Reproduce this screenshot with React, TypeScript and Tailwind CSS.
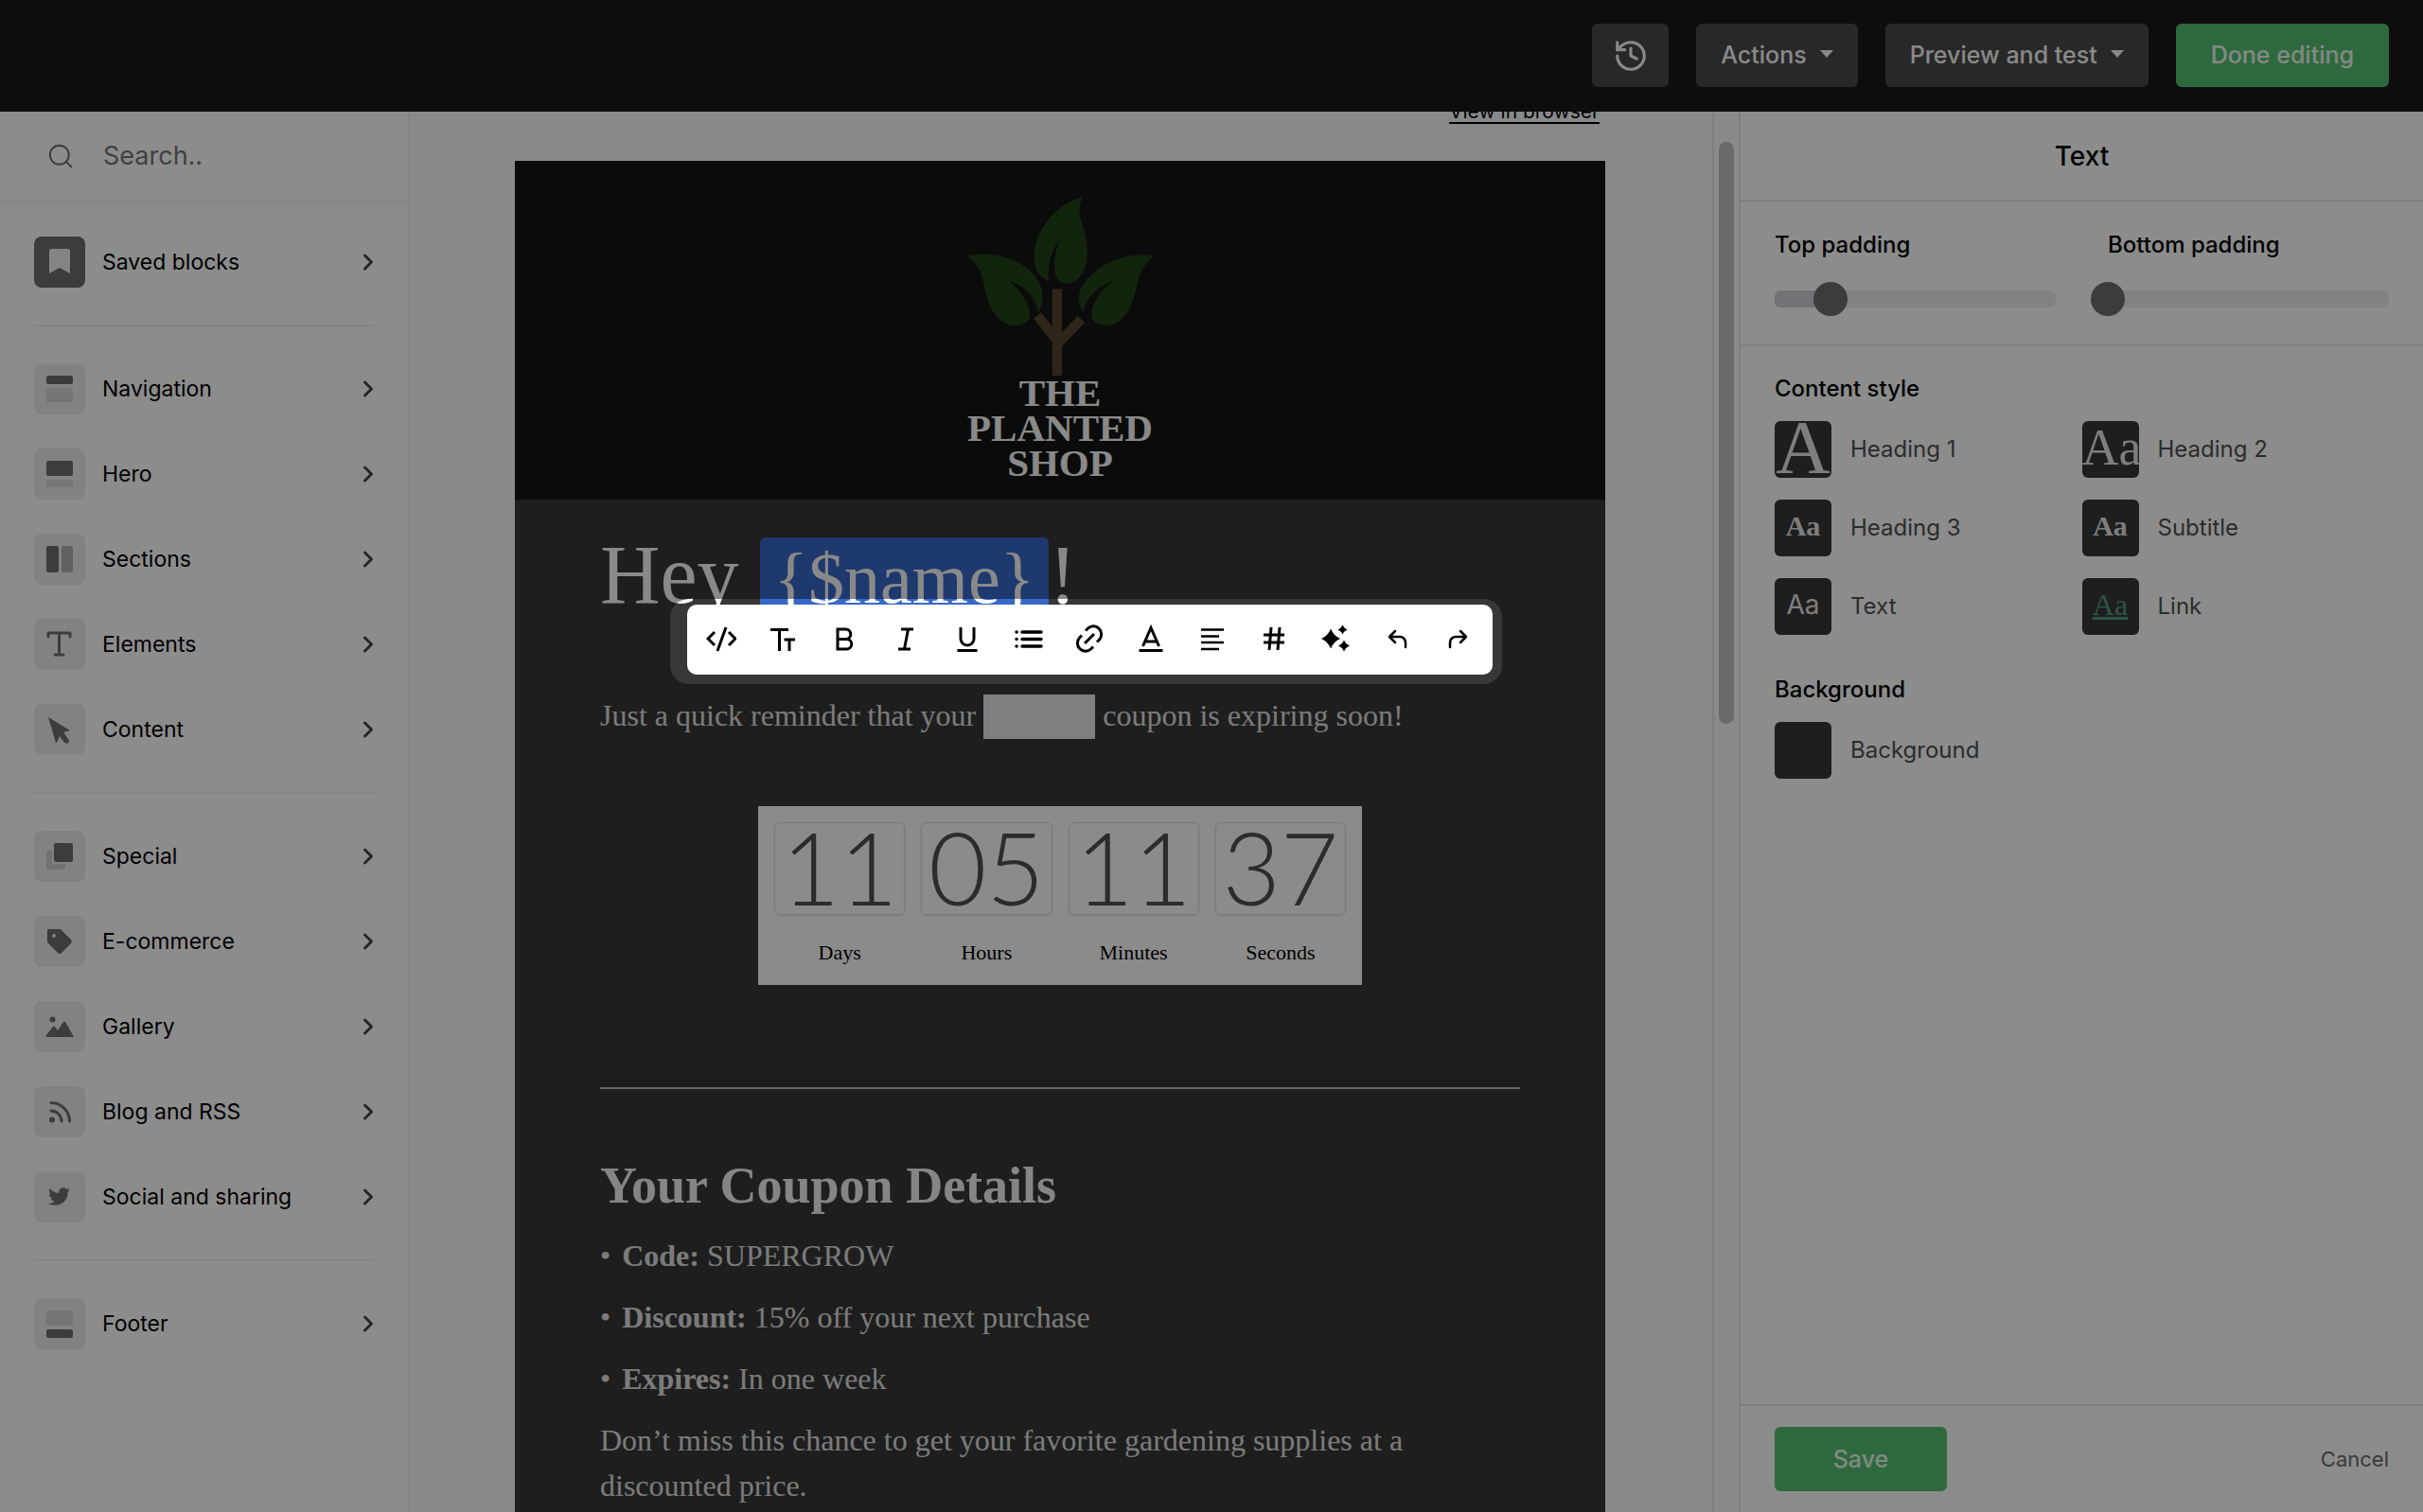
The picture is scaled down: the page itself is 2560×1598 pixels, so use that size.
import type { ReactNode } from "react";
import { ChevronRight, History, Search } from "lucide-react";
import { FaTwitter } from "react-icons/fa";

type BlockItem = { label: string; icon: ReactNode; solid?: boolean };

const BLOCK_GROUPS: BlockItem[][] = [
  [
    {
      label: "Saved blocks",
      solid: true,
      icon: <path d="M18 13h18a2 2 0 0 1 2 2v24l-11-6-11 6V15a2 2 0 0 1 2-2z" className="fill-[#eef0f2]" />,
    },
  ],
  [
    {
      label: "Navigation",
      icon: (
        <>
          <rect x="13" y="13" width="28" height="9" rx="2" />
          <path d="M15 26h24a2 2 0 0 1 2 2v13H13V28a2 2 0 0 1 2-2z" className="fill-[#d3d5d9]" />
        </>
      ),
    },
    {
      label: "Hero",
      icon: (
        <>
          <rect x="13" y="13" width="28" height="16" rx="2" />
          <path d="M15 33h24a2 2 0 0 1 2 2v6H13v-6a2 2 0 0 1 2-2z" className="fill-[#d3d5d9]" />
        </>
      ),
    },
    {
      label: "Sections",
      icon: (
        <>
          <rect x="13" y="13" width="13" height="28" rx="2" />
          <rect x="29" y="13" width="12" height="28" rx="2" className="fill-[#b0b0b0]" />
        </>
      ),
    },
    {
      label: "Elements",
      icon: (
        <path
          d="M15 19v-4h23v4M26.500 15v23M22 38h9"
          fill="none"
          stroke="#6e6e6e"
          strokeWidth="3"
          strokeLinecap="round"
          strokeLinejoin="round"
        />
      ),
    },
    { label: "Content", icon: <path d="M15 14l23 14-7 2 5 7a2.400 2.400 0 0 1-3 4h-1l-5-7-3 7h-1z" /> },
  ],
  [
    {
      label: "Special",
      icon: (
        <>
          <path d="M15 21h4v14h14v4a2 2 0 0 1-2 2H15a2 2 0 0 1-2-2V23a2 2 0 0 1 2-2z" className="fill-[#cdcfd2]" />
          <rect x="21" y="13" width="20" height="20" rx="2" />
        </>
      ),
    },
    {
      label: "E-commerce",
      icon: (
        <path
          fillRule="evenodd"
          d="M15 14h13l11 11a3 3 0 0 1 0 4L29 39a3 3 0 0 1-4 0L14 28V15a1 1 0 0 1 1-1zm6 5a2 2 0 1 0 0 4 2 2 0 0 0 0-4z"
        />
      ),
    },
    {
      label: "Gallery",
      icon: (
        <>
          <circle cx="19.500" cy="19.500" r="3" />
          <path d="M14 38a1 1 0 0 1-1-2l7-9q1-1 2 0l3 4 6-9q1-1 2 0l8 14a1 1 0 0 1-1 2z" />
        </>
      ),
    },
    {
      label: "Blog and RSS",
      icon: (
        <>
          <circle cx="19" cy="35.500" r="3" />
          <path
            d="M18 26a11 11 0 0 1 11 11M18 17.500A19.500 19.500 0 0 1 37.500 37"
            fill="none"
            stroke="#6e6e6e"
            strokeWidth="3"
            strokeLinecap="round"
          />
        </>
      ),
    },
    { label: "Social and sharing", icon: <FaTwitter x="15" y="15" width="24" height="24" /> },
  ],
  [
    {
      label: "Footer",
      icon: (
        <>
          <path d="M13 13h28v16H15a2 2 0 0 1-2-2z" className="fill-[#d3d5d9]" />
          <rect x="13" y="33" width="28" height="9" rx="2" />
        </>
      ),
    },
  ],
];

// Icons are drawn around the origin of a 32 x 32 box.
const TOOLS: { label: string; icon: ReactNode }[] = [
  { label: "Source code", icon: <path d="M-7-8l-7 7 7 7M5-13L-4 12M8-8l7 7-7 7" /> },
  { label: "Font size", icon: <path d="M-13-10.500H6M-3.500-10.500V12M1.500 0H13M7 0v12" /> },
  {
    label: "Bold",
    icon: <path d="M-7-11H1.500a5 5 0 0 1 0 10.500H-7zM-7-.5H2.500a5 5 0 0 1 0 10.500H-7z" />,
  },
  { label: "Italic", icon: <path d="M-5-11H8M-8 10H5M2.500-11L-1.500 10" /> },
  { label: "Underline", icon: <path d="M-7-13V-1a7 7 0 0 0 14 0v-12M-10.500 11.500h21" /> },
  {
    label: "List",
    icon: <path strokeWidth="3.500" strokeLinecap="round" d="M-13-8h.1M-13-.5h.1M-13 7h.1M-7-8H13M-7-.5H13M-7 7H13" />,
  },
  {
    label: "Link",
    icon: (
      <path d="M-4-9.500l2.500-2.500a8.500 8.500 0 0 1 12 12L8 2.500M4 7.500L1.500 10a8.500 8.500 0 0 1-12-12L-8-4.500M-5 4L5-6" />
    ),
  },
  { label: "Text color", icon: <path d="M-8.500 7L0-12.500 8.500 7M-6 2H6M-12.500 11.500h25" /> },
  { label: "Align left", icon: <path strokeWidth="2.500" d="M-12-10.500h24M-12-3.500H7M-12 3h24M-12 10H7" /> },
  { label: "Variable", icon: <path d="M-3-13l-2 24M6-13L4 11M-11-5h22M-11 3h22" /> },
  {
    label: "Assistant",
    icon: (
      <path
        fill="currentColor"
        stroke="none"
        d="M-5-11.500q3 7.500 10 10.500-7 3-10 10.500-3-7.500-10-10.500 7-3 10-10.500zM7.500-15.500q1.500 3.500 5 5-3.500 1.500-5 5-1.500-3.500-5-5 3.500-1.500 5-5zM9 .5q2 4.500 6 6-4 1.500-6 6-2-4.500-6-6 4-1.500 6-6z"
      />
    ),
  },
  {
    label: "Undo",
    icon: <path strokeWidth="2.500" strokeLinecap="round" strokeLinejoin="round" d="M-2-9l-6 6 6 6M-8-3H3a6 6 0 0 1 6 6v5" />,
  },
  {
    label: "Redo",
    icon: <path strokeWidth="2.500" strokeLinecap="round" strokeLinejoin="round" d="M2-9l6 6-6 6M8-3H-3a6 6 0 0 0-6 6v5" />,
  },
];

const STYLES = [
  {
    label: "Heading 1",
    sample: "A",
    className: "justify-center font-['Liberation_Serif',serif] text-[80px] leading-[54px] text-[#e6e6e6]",
  },
  {
    label: "Heading 2",
    sample: "Aa",
    className: "justify-start font-['Liberation_Serif',serif] text-[54px] leading-[54px] text-[#e6e6e6]",
  },
  {
    label: "Heading 3",
    sample: "Aa",
    className: "justify-center font-['Liberation_Serif',serif] text-[30px] font-bold text-[#e6e6e6]",
  },
  {
    label: "Subtitle",
    sample: "Aa",
    className: "justify-center font-['Liberation_Serif',serif] text-[30px] font-bold text-[#e6e6e6]",
  },
  { label: "Text", sample: "Aa", className: "justify-center text-[28px] text-[#e6e6e6]" },
  {
    label: "Link",
    sample: "Aa",
    className: "justify-center font-['Liberation_Serif',serif] text-[32px] text-[#559a83] underline",
  },
];

const COUNTDOWN = [
  { value: "11", unit: "Days" },
  { value: "05", unit: "Hours" },
  { value: "11", unit: "Minutes" },
  { value: "37", unit: "Seconds" },
];

const COUPON = [
  { term: "Code:", value: "SUPERGROW" },
  { term: "Discount:", value: "15% off your next purchase" },
  { term: "Expires:", value: "In one week" },
];

export default function App() {
  return (
    <div className="flex h-screen flex-col overflow-hidden bg-white font-[Inter,sans-serif] text-black">
      <TopBar />
      <div className="flex min-h-0 flex-1">
        <BlockSidebar />
        <Canvas />
        <div className="w-[30px] shrink-0 border-x-2 border-[#e6e6e6] bg-[#fafafa] px-[5px] pt-8">
          <div className="h-[615px] rounded-full bg-[#c1c1c1]" />
        </div>
        <SettingsPanel />
      </div>
    </div>
  );
}

function TopBar() {
  const button = "flex h-[67px] items-center rounded-md bg-[#4a4a4a] text-[25px] font-medium text-[#fafafa]";
  return (
    <header className="relative z-10 flex h-[118px] shrink-0 items-start justify-end gap-[29px] bg-[#181818] px-9 pt-[25px]">
      <button aria-label="History" className={`${button} w-[81px] justify-center`}>
        <History className="size-[38px]" />
      </button>
      <button className={`${button} gap-3.5 px-[26px]`}>
        Actions
        <Caret />
      </button>
      <button className={`${button} gap-3.5 px-[26px]`}>
        Preview and test
        <Caret />
      </button>
      <button className="h-[67px] rounded-md bg-[#55c071] px-[37px] text-[25px] font-medium text-white/90">
        Done editing
      </button>
    </header>
  );
}

function Caret() {
  return (
    <svg viewBox="0 0 14 8" className="mb-1 h-2 w-3.5 fill-current">
      <path d="M0 0h14L7 8z" />
    </svg>
  );
}

function BlockSidebar() {
  return (
    <aside className="w-[433px] shrink-0 border-r-2 border-[#f0f0f0] bg-white">
      <label className="flex h-24 items-center gap-[30px] border-b-2 border-[#f0f0f0] pl-[49px] pr-9">
        <Search className="size-[30px] shrink-0 text-[#6e6e6e]" strokeWidth={1.5} />
        <input
          type="search"
          aria-label="Search blocks"
          placeholder="Search.."
          className="w-full min-w-0 bg-transparent text-[27px] outline-none placeholder:text-[#757575]"
        />
      </label>
      <nav className="divide-y-2 divide-[#f0f0f0] px-9">
        {BLOCK_GROUPS.map((group) => (
          <ul key={group[0].label} className="flex flex-col gap-9 py-[39px] first:pt-9">
            {group.map((item) => (
              <li key={item.label}>
                <button className="flex w-full items-center text-left text-[23px] leading-8">
                  <span
                    className={`mr-[18px] rounded-lg ${item.solid ? "bg-[#6e6e6e]" : "bg-[#ebedf0]"}`}
                  >
                    <svg viewBox="0 0 54 54" className="size-[54px] fill-[#6e6e6e] text-[#6e6e6e]">
                      {item.icon}
                    </svg>
                  </span>
                  {item.label}
                  <ChevronRight className="-mr-2 ml-auto size-7 text-[#444]" strokeWidth={2.5} />
                </button>
              </li>
            ))}
          </ul>
        ))}
      </nav>
    </aside>
  );
}

function Canvas() {
  return (
    <main className="min-w-0 flex-1 bg-[#f7f9fc] pr-0.5">
      <div className="mx-auto w-[1152px]">
        <div className="-mt-4 flex h-[68px] justify-end pr-1.5 text-[21px] leading-8">
          <a href="#browser" className="underline underline-offset-4">
            View in browser
          </a>
        </div>
        <article className="bg-[#383838] pb-12 font-['Liberation_Serif',serif] text-[#e1e1e1]">
          <Logo />
          <div className="px-[90px] text-[32px] leading-[48px]">
            <div className="relative pt-[38px]">
              <h1 className="text-[88px] leading-[84px] text-[#fafafa]">
                Hey{" "}
                <span className="inline-block rounded-md bg-[#3869c8] px-[15px] text-[76px] leading-[86px]">
                  {"{$name}"}
                </span>
                !
              </h1>
              <Toolbar />
            </div>
            <p className="mt-[78px]">
              Just a quick reminder that your{" "}
              <span className="inline-block h-[47px] w-[118px] bg-[#e7e8ec] align-[-14px]" /> coupon is expiring soon!
            </p>
            <Countdown />
            <hr className="mt-[108px] border-t-2 border-[#b8b8b8]" />
            <h2 className="mt-[70px] text-[54px] font-bold leading-[64px] text-[#f2f2f2]">Your Coupon Details</h2>
            <ul className="mt-[18px] flex flex-col gap-[17px]">
              {COUPON.map((line) => (
                <li key={line.term}>
                  <span className="mr-1">•</span> <b>{line.term}</b> {line.value}
                </li>
              ))}
            </ul>
            <p className="mt-[17px]">
              Don’t miss this chance to get your favorite gardening supplies at a discounted price.
            </p>
          </div>
        </article>
      </div>
    </main>
  );
}

function Logo() {
  return (
    <div className="flex h-[358px] flex-col items-center bg-[#151515] pt-9">
      <svg viewBox="120 80 600 562" className="h-[191px] w-[204px] shrink-0">
        <g className="fill-[#1f4217]">
          <path d="M492 84C430 104 380 148 354 204C338 242 334 286 348 316C356 332 370 342 385 347C380 300 392 258 417 220C404 262 400 290 404 322C410 344 422 356 440 356C476 354 498 322 504 280C508 240 500 204 490 176C480 148 474 116 492 84z" />
          <path d="M128 270C170 262 220 262 262 278C310 296 350 330 362 370C370 400 364 425 352 446C345 400 310 362 262 348C300 380 324 420 327 452C326 475 306 486 280 486C235 486 208 446 194 402C182 364 182 330 164 304C154 288 142 278 128 270z" />
          <path d="M714 268C672 263 630 266 590 282C540 302 498 338 482 376C474 402 480 426 492 444C502 400 536 364 584 348C546 376 520 414 517 452C518 474 538 486 564 486C606 486 634 448 648 404C662 362 660 330 682 302C692 288 702 278 714 268z" />
        </g>
        <path
          fill="none"
          strokeWidth="30"
          className="stroke-[#54452f]"
          d="M411 373v269M349 455l62 78M486 467l-75 77"
        />
      </svg>
      <p className="text-center text-[41px] font-bold leading-[37px] text-[#fafafa]">
        THE
        <br />
        PLANTED
        <br />
        SHOP
      </p>
    </div>
  );
}

// The outer box is the cut-out of the page dimming, the inner one is the bar.
function Toolbar() {
  return (
    <div className="absolute left-[74px] top-[105px] z-20 w-[879px] rounded-[20px] pb-2.5 pl-[18px] pr-2.5 pt-1.5 shadow-[0_0_0_3000px_rgba(0,0,0,0.45)]">
      <div role="toolbar" className="flex h-[74px] items-center rounded-[10px] bg-white px-1 text-black">
        {TOOLS.map((tool) => (
          <button key={tool.label} aria-label={tool.label} className="flex h-full flex-1 items-center justify-center">
            <svg viewBox="-16 -16 32 32" className="size-8" fill="none" stroke="currentColor" strokeWidth="3">
              {tool.icon}
            </svg>
          </button>
        ))}
      </div>
    </div>
  );
}

function Countdown() {
  return (
    <div className="mx-auto mt-[71px] grid h-[189px] w-[638px] grid-cols-4 gap-[17px] bg-[#fefefe] px-[17px] pt-[17px]">
      {COUNTDOWN.map((part) => (
        <div key={part.unit} className="flex flex-col items-center gap-6">
          <div className="flex h-[98px] w-full items-center justify-center rounded-md border border-[#dcdcdc] pb-1 font-[Lato,sans-serif] text-[106px] font-light leading-none text-[#505050] shadow">
            {part.value}
          </div>
          <div className="text-[22px] leading-8 text-black">{part.unit}</div>
        </div>
      ))}
    </div>
  );
}

function SettingsPanel() {
  return (
    <aside className="flex w-[721px] shrink-0 flex-col bg-white text-[24px] leading-8">
      <h2 className="flex h-[95px] items-center justify-center border-b-2 border-[#eaeaea] text-[28px] font-medium">
        Text
      </h2>
      <section className="grid grid-cols-2 gap-[55px] border-b-2 border-[#eaeaea] px-9 pb-[39px] pt-[30px]">
        <PaddingSlider id="top-padding" label="Top padding" value={20} />
        <PaddingSlider id="bottom-padding" label="Bottom padding" value={0} />
      </section>
      <section className="px-9 pt-[29px]">
        <h3 className="font-medium">Content style</h3>
        <div className="mt-[18px] grid grid-cols-2 gap-y-[23px]">
          {STYLES.map((style) => (
            <button key={style.label} className="flex items-center gap-5 text-left text-[#505050]">
              <span
                className={`flex size-[60px] items-center overflow-hidden rounded-md bg-[#383838] ${style.className}`}
              >
                <span className="-mt-1">{style.sample}</span>
              </span>
              {style.label}
            </button>
          ))}
        </div>
        <h3 className="mt-[42px] font-medium">Background</h3>
        <button className="mt-[18px] flex items-center gap-5 text-[#505050]">
          <span className="size-[60px] rounded-md bg-[#383838]" />
          Background
        </button>
      </section>
      <footer className="mt-auto flex items-center justify-between border-t-2 border-[#eaeaea] px-9 py-[22px]">
        <button className="h-[68px] w-[182px] rounded-md bg-[#55c071] text-[25px] font-medium text-white/90">
          Save
        </button>
        <button className="text-[22px] text-[#6a6a6a]">Cancel</button>
      </footer>
    </aside>
  );
}

function PaddingSlider({ id, label, value }: { id: string; label: string; value: number }) {
  return (
    <div>
      <label htmlFor={id} className="font-medium">
        {label}
      </label>
      <div className="relative mt-8 h-[18px] rounded-md bg-[#ebedf0]">
        <div className="h-full rounded-l-md bg-[#cfd1d8]" style={{ width: `${value}%` }} />
        {/* Runs half a thumb past both ends so that the thumb centres on them. */}
        <input
          id={id}
          type="range"
          defaultValue={value}
          className="absolute -inset-x-[18px] inset-y-0 appearance-none bg-transparent [&::-webkit-slider-thumb]:size-9 [&::-webkit-slider-thumb]:appearance-none [&::-webkit-slider-thumb]:rounded-full [&::-webkit-slider-thumb]:bg-[#6e6e6e]"
        />
      </div>
    </div>
  );
}
